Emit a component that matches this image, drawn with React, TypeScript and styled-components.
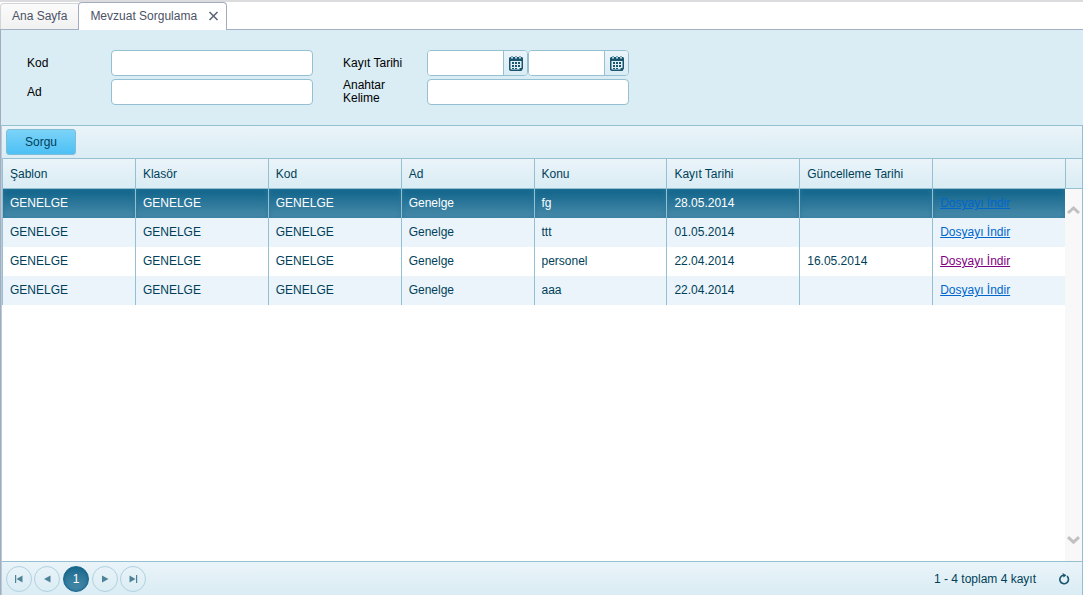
import React, { useState } from 'react';
import styled, { createGlobalStyle, css } from 'styled-components';

const line = '#94c0d2';
const ink = '#003f59';
const bar = 'linear-gradient(#eaf4f9, #daecf4)';

const GlobalStyle = createGlobalStyle`
  *, *::before, *::after { box-sizing: border-box; }
  body {
    margin: 0;
    background: #fff;
    color: ${ink};
    font: 12px/16px "Liberation Sans", Arial, sans-serif;
  }
  button, input { font: inherit; color: inherit; margin: 0; }
`;

const Page = styled.div`
  display: flex;
  flex-direction: column;
  min-height: 100vh;
  border-top: 2px solid #dcdcdf;
`;

const TabStrip = styled.nav`
  display: flex;
  align-items: flex-end;
  height: 28px;
  border-bottom: 1px solid #a3b0c3;
`;

const Tab = styled.div<{ $active?: boolean }>`
  display: flex;
  align-items: center;
  gap: 11px;
  height: 26px;
  padding: 0 11px 2px;
  border: 1px solid #d3d5da;
  border-width: 1px 0 0 1px;
  border-radius: 4px 0 0 0;
  background: linear-gradient(#fbfbfb, #f1f1f1);
  color: #4b5266;
  ${(p) => p.$active && css`
    height: 28px;
    margin-bottom: -1px;
    padding: 0 7px 2px 11px;
    border: 1px solid #a3acbf;
    border-bottom: 0;
    border-radius: 4px 4px 0 0;
    background: #fff;
  `}
`;

const PlainButton = styled.button`
  display: flex;
  align-items: center;
  padding: 0;
  border: 0;
  background: none;
  cursor: pointer;
`;

const Panel = styled.main`
  flex: 1;
  display: flex;
  flex-direction: column;
  border-left: 1px solid #a3acbf;
  background: #daecf4;
`;

const Filters = styled.form`
  display: flex;
  flex-wrap: wrap;
  gap: 30px;
  padding: 20px 26px;
  color: #000;
`;

const FilterGroup = styled.div`
  display: grid;
  grid-template-columns: 84px 202px;
  grid-auto-rows: 26px;
  row-gap: 3px;
  align-items: center;
`;

const Label = styled.label`
  padding-right: 12px;
  line-height: 13px;
`;

const Field = styled.input`
  width: 100%;
  height: 26px;
  padding: 0 6px;
  border: 1px solid ${line};
  border-radius: 4px;
  background: #fff;
`;

const DateRange = styled.div`
  display: grid;
  grid-template-columns: 1fr 1fr;
`;

const DateBox = styled.div`
  display: flex;
  height: 26px;
  overflow: hidden;
  border: 1px solid ${line};
  border-radius: 4px;
  background: #fff;
`;

const DateInput = styled.input`
  flex: 1;
  min-width: 0;
  padding: 0 6px;
  border: 0;
  background: #fff;
`;

const CalendarButton = styled(PlainButton)`
  justify-content: center;
  width: 24px;
  border-left: 1px solid ${line};
  background: ${bar};
`;

const Grid = styled.section`
  flex: 1;
  display: flex;
  flex-direction: column;
  border: 1px solid ${line};
  border-bottom: 0;
  border-left-color: #b9cbd9;
  background: #fff;
`;

const Toolbar = styled.div`
  height: 33px;
  padding: 3px 4px;
  border-bottom: 1px solid ${line};
  background: ${bar};
`;

const QueryButton = styled.button`
  height: 26px;
  min-width: 70px;
  padding: 0 12px;
  border: 1px solid #7fbcd6;
  border-radius: 3px;
  background: linear-gradient(#7cd3f8, #4cc0f5);
  cursor: pointer;
`;

const GridBody = styled.div`
  flex: 1;
  display: flex;
`;

const TableArea = styled.div`
  flex: 1;
  min-width: 0;
`;

const Table = styled.table`
  width: 100%;
  table-layout: fixed;
  border-collapse: separate;
  border-spacing: 0;
`;

const HeadCell = styled.th`
  height: 30px;
  padding: 0 7px;
  border: 1px solid ${line};
  border-width: 0 0 1px 1px;
  background: ${bar};
  font-weight: normal;
  text-align: left;
`;

const Row = styled.tr<{ $selected: boolean }>`
  color: ${(p) => (p.$selected ? '#fff' : ink)};
  background: #fff;
  &:nth-child(even) { background: #eaf4fa; }
`;

const Cell = styled.td<{ $selected: boolean }>`
  height: 29px;
  padding: 0 7px 1px;
  border-left: 1px solid ${line};
  white-space: nowrap;
  ${(p) => p.$selected && css`
    background: linear-gradient(#0f638a, #4a8cab) padding-box;
    box-shadow: inset 0 0 5px #2a789b;
  `}
`;

const FileLink = styled.a<{ $visited?: boolean }>`
  color: ${(p) => (p.$visited ? '#800080' : '#0066cc')};
`;

const Gutter = styled.div`
  display: flex;
  flex-direction: column;
  width: 17px;
`;

const GutterHead = styled.div`
  height: 30px;
  border: 1px solid ${line};
  border-width: 0 0 1px 1px;
  background: ${bar};
`;

const ScrollTrack = styled.div`
  flex: 1;
  display: flex;
  flex-direction: column;
  justify-content: space-between;
  align-items: center;
  padding: 16px 0;
  background: #f8f8f8;
`;

const Pager = styled.footer`
  display: flex;
  align-items: center;
  gap: 2px;
  height: 34px;
  padding: 1px 12px 0 4px;
  border-top: 1px solid ${line};
  background: ${bar};
`;

const PageButton = styled.button<{ $current?: boolean }>`
  display: flex;
  align-items: center;
  justify-content: center;
  width: 26px;
  height: 26px;
  padding: 0;
  border: 1px solid #afd1df;
  border-radius: 50%;
  background: none;
  color: #4f8298;
  cursor: pointer;
  ${(p) => p.$current && css`
    margin: 0 1px;
    border-color: #15658a;
    background: linear-gradient(#1c6a8e, #4a8cab);
    box-shadow: inset 0 0 4px #15658a;
    color: #fff;
  `}
`;

const Summary = styled.span`
  margin-left: auto;
  padding-right: 20px;
`;

const CalendarIcon = () => (
  <svg width="14" height="15" viewBox="0 0 14 15" aria-hidden="true">
    <path
      fillRule="evenodd"
      d="M1 1h1v1.5h2V1h2v1.5h2V1h2v1.5h2V1h1l1 1v10.5L12.5 15H1.5L0 14V2zM1.5 5v8l.5.5h8.5V12h2V5z"
      fill="#1a556e"
    />
    <path d="M2 0h2v1.500H2zM6 0h2v1.500H6zM10 0h2v1.500h-2z" fill="#7fa9bb" />
    <path
      d="M6 6h2v2H6zM9 6h2v2H9zM3 6h2v2H3zM3 9h2v2H3zM6 9h2v2H6zM9 9h2v2H9zM3 12h2v1H3zM6 12h2v1H6z"
      fill="#1a556e"
    />
  </svg>
);

const CloseIcon = () => (
  <svg width="11" height="10" viewBox="0 0 11 10" aria-hidden="true">
    <path d="M1.5 1l8 8M9.5 1l-8 8" stroke="#5a6173" strokeWidth="1.5" />
  </svg>
);

const Chevron = ({ down }: { down?: boolean }) => (
  <svg width="13" height="10" viewBox="0 0 13 10" aria-hidden="true">
    <path
      d={down ? 'M1 2.200l5.500 5 5.500-5' : 'M1 8l5.500-5 5.500 5'}
      fill="none"
      stroke="#c1c1c1"
      strokeWidth="3"
    />
  </svg>
);

const pagerShapes = {
  first: 'M1 1h1.200v8H1zM8.500 1.500v7L2.500 5z',
  previous: 'M8.500 1.500v7L2 5z',
  next: 'M2 1.500v7L8.500 5z',
  last: 'M1.500 1.500v7L7.500 5zM8 1h1.200v8H8z',
};

const PagerIcon = ({ name }: { name: keyof typeof pagerShapes }) => (
  <svg width="10" height="10" viewBox="0 0 10 10" aria-hidden="true">
    <path d={pagerShapes[name]} fill="currentColor" />
  </svg>
);

const RefreshIcon = () => (
  <svg width="12" height="12" viewBox="0 0 12 12" aria-hidden="true">
    <path d="M9 3.200A4.300 4.300 0 1 1 5.500 2.200" fill="none" stroke="#1a556e" strokeWidth="1.6" />
    <path d="M4.500 0L8.500 2.200 5.500 4.600z" fill="#1a556e" />
  </svg>
);

const columns = ['Şablon', 'Klasör', 'Kod', 'Ad', 'Konu', 'Kayıt Tarihi', 'Güncelleme Tarihi', ''];

const records = [
  { subject: 'fg', created: '28.05.2014', updated: '', visited: false },
  { subject: 'ttt', created: '01.05.2014', updated: '', visited: false },
  { subject: 'personel', created: '22.04.2014', updated: '16.05.2014', visited: true },
  { subject: 'aaa', created: '22.04.2014', updated: '', visited: false },
];

const DateField = ({ id, label }: { id: string; label?: string }) => (
  <DateBox>
    <DateInput id={id} type="text" aria-label={label} />
    <CalendarButton type="button" aria-label="Takvim"><CalendarIcon /></CalendarButton>
  </DateBox>
);

export default function App() {
  const [selected, setSelected] = useState(0);

  return (
    <Page>
      <GlobalStyle />
      <TabStrip>
        <Tab><PlainButton>Ana Sayfa</PlainButton></Tab>
        <Tab $active>
          <PlainButton>Mevzuat Sorgulama</PlainButton>
          <PlainButton aria-label="Kapat"><CloseIcon /></PlainButton>
        </Tab>
      </TabStrip>
      <Panel>
        <Filters>
          <FilterGroup>
            <Label htmlFor="kod">Kod</Label>
            <Field id="kod" type="text" />
            <Label htmlFor="ad">Ad</Label>
            <Field id="ad" type="text" />
          </FilterGroup>
          <FilterGroup>
            <Label htmlFor="tarih">Kayıt Tarihi</Label>
            <DateRange>
              <DateField id="tarih" />
              <DateField id="tarih-son" label="Kayıt Tarihi (son)" />
            </DateRange>
            <Label htmlFor="anahtar">Anahtar Kelime</Label>
            <Field id="anahtar" type="text" />
          </FilterGroup>
        </Filters>
        <Grid>
          <Toolbar><QueryButton type="button">Sorgu</QueryButton></Toolbar>
          <GridBody>
            <TableArea>
              <Table>
                <thead>
                  <tr>{columns.map((name, i) => <HeadCell key={i} scope="col">{name}</HeadCell>)}</tr>
                </thead>
                <tbody>
                  {records.map((r, i) => {
                    const on = i === selected;
                    const values = ['GENELGE', 'GENELGE', 'GENELGE', 'Genelge', r.subject, r.created, r.updated];
                    return (
                      <Row key={i} $selected={on} onClick={() => setSelected(i)}>
                        {values.map((v, c) => <Cell key={c} $selected={on}>{v}</Cell>)}
                        <Cell $selected={on}>
                          <FileLink href="#" $visited={r.visited}>Dosyayı İndir</FileLink>
                        </Cell>
                      </Row>
                    );
                  })}
                </tbody>
              </Table>
            </TableArea>
            <Gutter>
              <GutterHead />
              <ScrollTrack><Chevron /><Chevron down /></ScrollTrack>
            </Gutter>
          </GridBody>
          <Pager>
            <PageButton aria-label="İlk sayfa"><PagerIcon name="first" /></PageButton>
            <PageButton aria-label="Önceki sayfa"><PagerIcon name="previous" /></PageButton>
            <PageButton $current>1</PageButton>
            <PageButton aria-label="Sonraki sayfa"><PagerIcon name="next" /></PageButton>
            <PageButton aria-label="Son sayfa"><PagerIcon name="last" /></PageButton>
            <Summary>1 - 4 toplam 4 kayıt</Summary>
            <PlainButton aria-label="Yenile"><RefreshIcon /></PlainButton>
          </Pager>
        </Grid>
      </Panel>
    </Page>
  );
}
